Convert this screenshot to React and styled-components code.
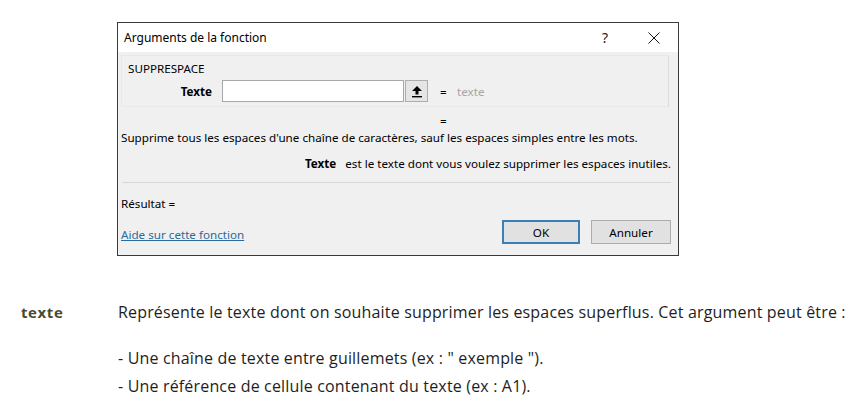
import React from 'react';
import styled, { createGlobalStyle } from 'styled-components';

const Global = createGlobalStyle`
  html, body { margin: 0; padding: 0; background: #fff; }
  body { width: 854px; height: 409px; overflow: hidden; }
`;

const Page = styled.div`
  display: flex;
  flex-direction: column;
  padding-top: 22px;
`;

const DialogRow = styled.div`
  display: flex;
  padding-left: 117px;
`;

const Dialog = styled.div`
  width: 560px;
  height: 232px;
  border: 1px solid #3a3a3a;
  background: #f0f0f0;
  display: flex;
  flex-direction: column;
  font-family: "Noto Sans", sans-serif;
  font-size: 11.65px;
  color: #000;
`;

const TitleBar = styled.div`
  height: 29px;
  background: #fff;
  display: flex;
  align-items: center;
  padding: 0 0 0 6px;
  font-size: 12px;
`;

const Title = styled.div`
  flex: 1;
`;

const TitleBtn = styled.div`
  width: ${p => p.$w}px;
  margin-right: ${p => p.$mr || 0}px;
  display: flex;
  justify-content: center;
  align-items: center;
  font-size: 14px;
  color: #222;
`;

const Body = styled.div`
  flex: 1;
  display: flex;
  flex-direction: column;
  padding: 3px 7px 0 3px;
`;

const Group = styled.div`
  border: 1px solid #e8e8e8;
  border-right-color: #dcdcdc;
  margin-right: 2px;
  padding: 5px 0 4px 6px;
  display: flex;
  flex-direction: column;
  gap: 3px;
`;

const FuncName = styled.div`
  line-height: 16px;
`;

const ArgLine = styled.div`
  display: flex;
  align-items: center;
  height: 22px;
`;

const ArgLabel = styled.div`
  width: 84px;
  text-align: right;
  font-weight: bold;
  padding-right: 10px;
`;

const Input = styled.div`
  width: 180px;
  height: 20px;
  border: 1px solid #a8a8a8;
  background: #fff;
`;

const RefButton = styled.div`
  width: 21px;
  height: 20px;
  border: 1px solid #adadad;
  background: #e5e5e5;
  display: flex;
  align-items: center;
  justify-content: center;
  margin-left: 1px;
`;

const Eq = styled.div`
  width: 17px;
  margin-left: ${p => p.$ml || 0}px;
`;

const Hint = styled.div`
  color: #a6a6a6;
`;

const ResultEq = styled.div`
  padding-left: 319px;
  line-height: 14px;
  margin-top: 7px;
`;

const Desc = styled.div`
  line-height: 16px;
  padding-top: 2px;
`;

const ArgDesc = styled.div`
  display: flex;
  justify-content: flex-end;
  gap: 9px;
  line-height: 16px;
  margin-top: 10px;
`;

const Bold = styled.span`
  font-weight: bold;
`;

const Separator = styled.div`
  height: 1px;
  background: #d8d8d8;
  margin: 10px 0 0 1px;
`;

const Result = styled.div`
  margin-top: 13px;
  line-height: 16px;
`;

const Footer = styled.div`
  display: flex;
  align-items: center;
  margin-top: 8px;
`;

const HelpLink = styled.a`
  flex: 1;
  color: #2b6c9c;
  text-decoration: underline;
  padding-top: 4px;
`;

const Button = styled.div`
  width: ${p => p.$primary ? 74 : 78}px;
  height: ${p => p.$primary ? 20 : 22}px;
  border: ${p => p.$primary ? '2px solid #3b7fb4' : '1px solid #adadad'};
  background: #e1e1e1;
  display: flex;
  align-items: center;
  justify-content: center;
  margin-left: ${p => p.$ml}px;
`;

const Doc = styled.div`
  display: grid;
  grid-template-columns: 97px 1fr;
  padding: 44px 0 0 21px;
  font-family: "Open Sans", sans-serif;
  font-size: 16px;
  color: #1e1e1e;
`;

const Term = styled.div`
  font-weight: bold;
  color: #4a4a2e;
  font-size: 15px;
  letter-spacing: 0.6px;
  line-height: 24px;
`;

const Para = styled.div`
  line-height: 24px;
  letter-spacing: 0.17px;
`;

const List = styled.div`
  grid-column: 2;
  margin-top: 20px;
  display: flex;
  flex-direction: column;
  line-height: 28px;
  letter-spacing: 0.17px;
`;

const UpArrow = () => (
  <svg width="12" height="13" viewBox="0 0 12 13">
    <path d="M6 1 L11 6 L7.5 6 L7.5 9.5 L4.5 9.5 L4.5 6 L1 6 Z" fill="#000" />
    <rect x="1" y="11" width="10" height="1.4" fill="#000" />
  </svg>
);

const CloseX = () => (
  <svg width="12" height="12" viewBox="0 0 12 12">
    <path d="M0.5 0.5 L11.5 11.5 M11.5 0.5 L0.5 11.5" stroke="#111" strokeWidth="1" fill="none" />
  </svg>
);

export default function App() {
  return (
    <Page>
      <Global />
      <DialogRow>
        <Dialog>
          <TitleBar>
            <Title>Arguments de la fonction</Title>
            <TitleBtn $w={22} $mr={14}>?</TitleBtn>
            <TitleBtn $w={48}><CloseX /></TitleBtn>
          </TitleBar>
          <Body>
            <Group>
              <FuncName>SUPPRESPACE</FuncName>
              <ArgLine>
                <ArgLabel>Texte</ArgLabel>
                <Input />
                <RefButton><UpArrow /></RefButton>
                <Eq $ml={12}>=</Eq>
                <Hint>texte</Hint>
              </ArgLine>
            </Group>
            <ResultEq>=</ResultEq>
            <Desc>Supprime tous les espaces d'une chaîne de caractères, sauf les espaces simples entre les mots.</Desc>
            <ArgDesc>
              <Bold>Texte</Bold>
              <span>est le texte dont vous voulez supprimer les espaces inutiles.</span>
            </ArgDesc>
            <Separator />
            <Result>Résultat =</Result>
            <Footer>
              <HelpLink>Aide sur cette fonction</HelpLink>
              <Button $primary $ml={0}>OK</Button>
              <Button $ml={11}>Annuler</Button>
            </Footer>
          </Body>
        </Dialog>
      </DialogRow>
      <Doc>
        <Term>texte</Term>
        <Para>Représente le texte dont on souhaite supprimer les espaces superflus. Cet argument peut être :</Para>
        <List>
          <div>- Une chaîne de texte entre guillemets (ex : " exemple ").</div>
          <div>- Une référence de cellule contenant du texte (ex : A1).</div>
        </List>
      </Doc>
    </Page>
  );
}
